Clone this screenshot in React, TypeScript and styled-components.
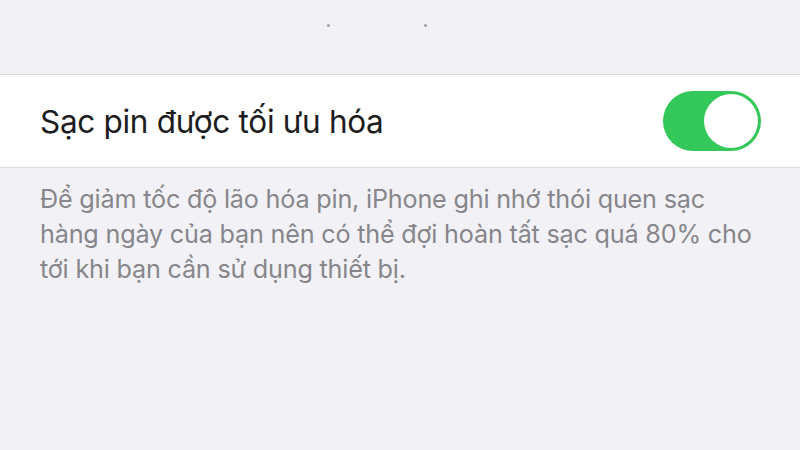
import React from 'react'
import styled, { createGlobalStyle } from 'styled-components'

const GlobalStyle = createGlobalStyle`
  html, body {
    margin: 0;
    padding: 0;
    background: #f2f2f6;
  }
  body {
    font-family: Inter, Roboto, "Liberation Sans", sans-serif;
  }
`

const Screen = styled.div`
  width: 800px;
  height: 450px;
  background: #f2f2f6;
  display: flex;
  flex-direction: column;
  overflow: hidden;
`

const TopArea = styled.div`
  height: 74px;
  display: flex;
  padding: 24px 0 0 327px;
  box-sizing: border-box;
  gap: 94px;
`

const Dot = styled.span`
  width: 3px;
  height: 3px;
  border-radius: 50%;
  background: #a0a0a6;
`

const Row = styled.div`
  height: 92px;
  background: #ffffff;
  border-top: 1px solid #d8d8dc;
  border-bottom: 1px solid #dcdce0;
  display: flex;
  align-items: center;
  justify-content: space-between;
  padding: 0 39px 0 40px;
`

const Label = styled.span`
  font-size: 31.5px;
  color: #1c1c1e;
  letter-spacing: -0.3px;
`

const Toggle = styled.div<{ on: boolean }>`
  width: 98px;
  height: 60px;
  border-radius: 30px;
  background: ${(p) => (p.on ? '#34c759' : '#e5e5ea')};
  display: flex;
  align-items: center;
  justify-content: ${(p) => (p.on ? 'flex-end' : 'flex-start')};
  padding: 3px;
  box-sizing: border-box;
`

const Knob = styled.div`
  width: 54px;
  height: 54px;
  border-radius: 50%;
  background: #ffffff;
`

const Footer = styled.p`
  margin: 0;
  padding: 14px 40px 0 40px;
  font-size: 25.2px;
  line-height: 35px;
  color: #86868b;
  letter-spacing: -0.2px;
`

export default function App () {
  return (
    <Screen>
      <GlobalStyle />
      <TopArea>
        <Dot />
        <Dot />
      </TopArea>
      <Row>
        <Label>Sạc pin được tối ưu hóa</Label>
        <Toggle on>
          <Knob />
        </Toggle>
      </Row>
      <Footer>
        Để giảm tốc độ lão hóa pin, iPhone ghi nhớ thói quen sạc<br />
        hàng ngày của bạn nên có thể đợi hoàn tất sạc quá 80% cho<br />
        tới khi bạn cần sử dụng thiết bị.
      </Footer>
    </Screen>
  )
}
